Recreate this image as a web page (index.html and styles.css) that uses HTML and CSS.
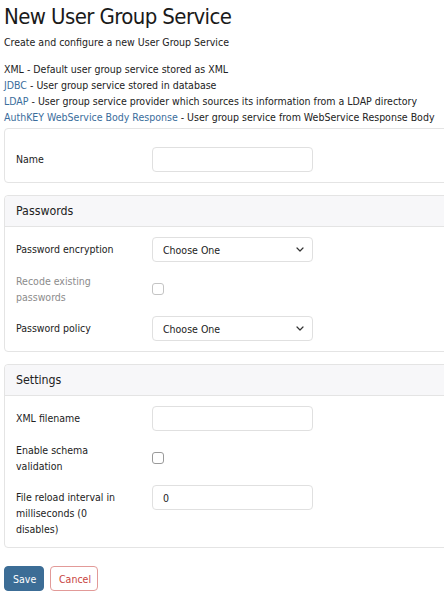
FILE: index.html
```html
<!DOCTYPE html>
<html>
<head>
<meta charset="utf-8">
<link rel="stylesheet" href="styles.css">
</head>
<body>
<div class="page">
  <h1 class="title">New User Group Service</h1>
  <p class="subtitle">Create and configure a new User Group Service</p>
  <ul class="types">
    <li><span class="plain">XML</span> - Default user group service stored as XML</li>
    <li><a class="link">JDBC</a> - User group service stored in database</li>
    <li><a class="link">LDAP</a> - User group service provider which sources its information from a LDAP directory</li>
    <li><a class="link">AuthKEY WebService Body Response</a> - User group service from WebService Response Body</li>
  </ul>

  <section class="card card-first">
    <div class="card-body first-body">
      <div class="row">
        <label class="label">Name</label>
        <div class="input"></div>
      </div>
    </div>
  </section>

  <section class="card">
    <div class="card-header">Passwords</div>
    <div class="card-body">
      <div class="row">
        <label class="label">Password encryption</label>
        <div class="input select"><span>Choose One</span>
          <svg class="chev" width="8" height="5" viewBox="0 0 8 5"><path d="M1 1 L4 4 L7 1" fill="none" stroke="#333" stroke-width="1.2" stroke-linecap="round" stroke-linejoin="round"/></svg>
        </div>
      </div>
      <div class="row check-row">
        <label class="label muted">Recode existing passwords</label>
        <span class="checkbox disabled"></span>
      </div>
      <div class="row">
        <label class="label">Password policy</label>
        <div class="input select"><span>Choose One</span>
          <svg class="chev" width="8" height="5" viewBox="0 0 8 5"><path d="M1 1 L4 4 L7 1" fill="none" stroke="#333" stroke-width="1.2" stroke-linecap="round" stroke-linejoin="round"/></svg>
        </div>
      </div>
    </div>
  </section>

  <section class="card">
    <div class="card-header">Settings</div>
    <div class="card-body">
      <div class="row">
        <label class="label">XML filename</label>
        <div class="input"></div>
      </div>
      <div class="row check-row">
        <label class="label">Enable schema validation</label>
        <span class="checkbox"></span>
      </div>
      <div class="row">
        <label class="label">File reload interval in milliseconds (0 disables)</label>
        <div class="input"><span>0</span></div>
      </div>
    </div>
  </section>

  <div class="actions">
    <button class="btn btn-save">Save</button>
    <button class="btn btn-cancel">Cancel</button>
  </div>
</div>
</body>
</html>
```

FILE: styles.css
```css
html, body {
  margin: 0;
  padding: 0;
  overflow: hidden;
  background: #fff;
}
body {
  font-family: "DejaVu Sans Condensed", "DejaVu Sans", sans-serif;
  font-size: 10.5px;
  color: #222;
}
.page {
  padding: 0 0 0 4px;
  width: 470px;
}
.title {
  font-size: 22px;
  font-weight: normal;
  letter-spacing: -0.6px;
  line-height: 28px;
  margin: 3px 0 0;
  color: #1a1a1a;
}
.subtitle {
  margin: 3px 0 0;
  line-height: 16px;
}
.types {
  list-style: none;
  margin: 11px 0 0;
  padding: 0;
  line-height: 16px;
  white-space: nowrap;
}
.link {
  color: #3a6d9c;
  text-decoration: none;
}
.card {
  border: 1px solid #e4e4e4;
  border-radius: 4px;
  width: 464px;
  margin-top: 12px;
  box-sizing: border-box;
}
.card-first {
  margin-top: 3px;
}
.card-header {
  height: 30px;
  line-height: 30px;
  background: #f7f7f9;
  border-bottom: 1px solid #e4e4e4;
  border-radius: 4px 4px 0 0;
  padding-left: 11px;
  font-size: 12.3px;
  color: #222;
}
.card-body {
  padding: 10px 11px 10px;
  display: flex;
  flex-direction: column;
  gap: 7px;
}
.first-body {
  padding-top: 18px;
}
.row {
  display: flex;
  align-items: flex-start;
  gap: 25px;
}
.check-row {
  align-items: center;
}
.label {
  width: 111px;
  flex: none;
  padding-top: 4px;
  line-height: 16px;
}
.check-row .label {
  padding-bottom: 4px;
}
.muted {
  color: #8c8c8c;
}
.input {
  width: 161px;
  height: 25px;
  box-sizing: border-box;
  border: 1px solid #e0e0e0;
  border-radius: 4px;
  padding: 0 10px;
  display: flex;
  align-items: center;
  color: #222;
  flex: none;
}
.select {
  justify-content: space-between;
  padding-right: 8px;
}
.chev {
  display: block;
}
.checkbox {
  width: 12px;
  height: 12px;
  box-sizing: border-box;
  border: 1px solid #9a9a9a;
  border-radius: 3px;
  flex: none;
  background: #fff;
}
.checkbox.disabled {
  border-color: #c4c4c4;
}
.actions {
  margin-top: 18px;
  display: flex;
  gap: 6px;
}
.btn {
  font-family: "DejaVu Sans Condensed", "DejaVu Sans", sans-serif;
  font-size: 10.5px;
  height: 25px;
  border-radius: 4px;
  padding: 0 8px;
  box-sizing: border-box;
  cursor: pointer;
}
.btn-save {
  background: #3c6d96;
  border: 1px solid #3c6d96;
  color: #fff;
  width: 40px;
}
.btn-cancel {
  background: #fff;
  border: 1px solid #e29a98;
  color: #c8443e;
  width: 48px;
}
```
